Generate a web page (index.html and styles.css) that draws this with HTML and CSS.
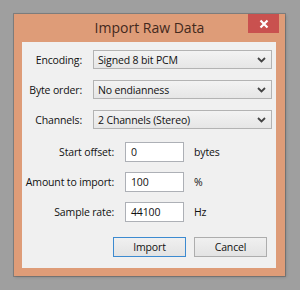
FILE: index.html
```html
<!DOCTYPE html>
<html>
<head>
<meta charset="utf-8">
<link rel="stylesheet" href="styles.css">
</head>
<body>
<div class="window">
  <div class="titlebar">
    <div class="title">Import Raw Data</div>
    <div class="close"><svg width="10" height="10" viewBox="0 0 10 10"><path d="M1.5 1.5L8.5 8.5M8.5 1.5L1.5 8.5" stroke="#fff" stroke-width="2.2"/></svg></div>
  </div>
  <div class="client">
    <div class="combos">
      <label class="lbl">Encoding:</label>
      <div class="combo"><span>Signed 8 bit PCM</span><svg class="chev" width="9" height="6" viewBox="0 0 9 6"><path d="M1 1L4.5 4.5L8 1" fill="none" stroke="#444" stroke-width="1.8"/></svg></div>
      <label class="lbl">Byte order:</label>
      <div class="combo"><span>No endianness</span><svg class="chev" width="9" height="6" viewBox="0 0 9 6"><path d="M1 1L4.5 4.5L8 1" fill="none" stroke="#444" stroke-width="1.8"/></svg></div>
      <label class="lbl">Channels:</label>
      <div class="combo"><span>2 Channels (Stereo)</span><svg class="chev" width="9" height="6" viewBox="0 0 9 6"><path d="M1 1L4.5 4.5L8 1" fill="none" stroke="#444" stroke-width="1.8"/></svg></div>
    </div>
    <div class="fields">
      <label class="lbl">Start offset:</label>
      <div class="field">0</div>
      <span class="unit">bytes</span>
      <label class="lbl">Amount to import:</label>
      <div class="field">100</div>
      <span class="unit">%</span>
      <label class="lbl">Sample rate:</label>
      <div class="field">44100</div>
      <span class="unit">Hz</span>
    </div>
    <div class="buttons">
      <div class="btn default">Import</div>
      <div class="btn">Cancel</div>
    </div>
  </div>
</div>
</body>
</html>
```
FILE: styles.css
```css
html, body {
  margin: 0;
  padding: 0;
}
body {
  background: #9f9f9f;
  width: 300px;
  height: 290px;
  overflow: hidden;
  font-family: "Open Sans", "Noto Sans", sans-serif;
  font-size: 10.5px;
  letter-spacing: -0.15px;
  color: #111;
}
.window {
  margin: 14px 0 0 14px;
  width: 271px;
  height: 262px;
  background: #de9c78;
  box-shadow: 0 0 0 1px rgba(70, 70, 70, 0.35), 1px 1px 3px rgba(0,0,0,0.2);
  display: flex;
  flex-direction: column;
}
.titlebar {
  height: 28px;
  display: grid;
  grid-template-columns: 1fr auto 1fr;
  align-items: start;
}
.title {
  grid-column: 2;
  font-size: 14px;
  letter-spacing: 0;
  color: #43291d;
  line-height: 28px;
}
.close {
  grid-column: 3;
  justify-self: end;
  width: 31px;
  height: 19px;
  margin-right: 6px;
  background: #c9514f;
  display: flex;
  align-items: center;
  justify-content: center;
}
.client {
  margin: 0 9px 8px 8px;
  height: 226px;
  background: #f0f0f0;
  box-sizing: border-box;
  padding: 8px 0 0 0;
  display: flex;
  flex-direction: column;
}
.lbl {
  text-align: right;
  white-space: nowrap;
}
.combos {
  display: grid;
  grid-template-columns: 60px 179px;
  grid-auto-rows: 19px;
  column-gap: 11px;
  row-gap: 11px;
  align-items: center;
}
.combo {
  height: 19px;
  box-sizing: border-box;
  border: 1px solid #b3b3b3;
  background: linear-gradient(#f3f3f3, #e6e6e6);
  display: flex;
  align-items: center;
  justify-content: space-between;
  padding: 0 5px 0 4px;
}
.fields {
  margin-top: 13px;
  display: grid;
  grid-template-columns: 92px 59px auto;
  grid-auto-rows: 20px;
  column-gap: 11px;
  row-gap: 10px;
  align-items: center;
}
.field {
  height: 20px;
  box-sizing: border-box;
  border: 1px solid #adb0b6;
  background: #fff;
  padding: 0 5px;
  line-height: 18px;
}
.unit {
  margin-left: -1px;
}
.buttons {
  margin-top: 15px;
  display: flex;
  justify-content: flex-end;
  gap: 8px;
  padding-right: 9px;
}
.btn {
  width: 73px;
  height: 20px;
  box-sizing: border-box;
  border: 1px solid #adadad;
  background: linear-gradient(#f0f0f0, #e3e3e3);
  text-align: center;
  line-height: 18px;
}
.btn.default {
  border-color: #3c8ad0;
}
```
